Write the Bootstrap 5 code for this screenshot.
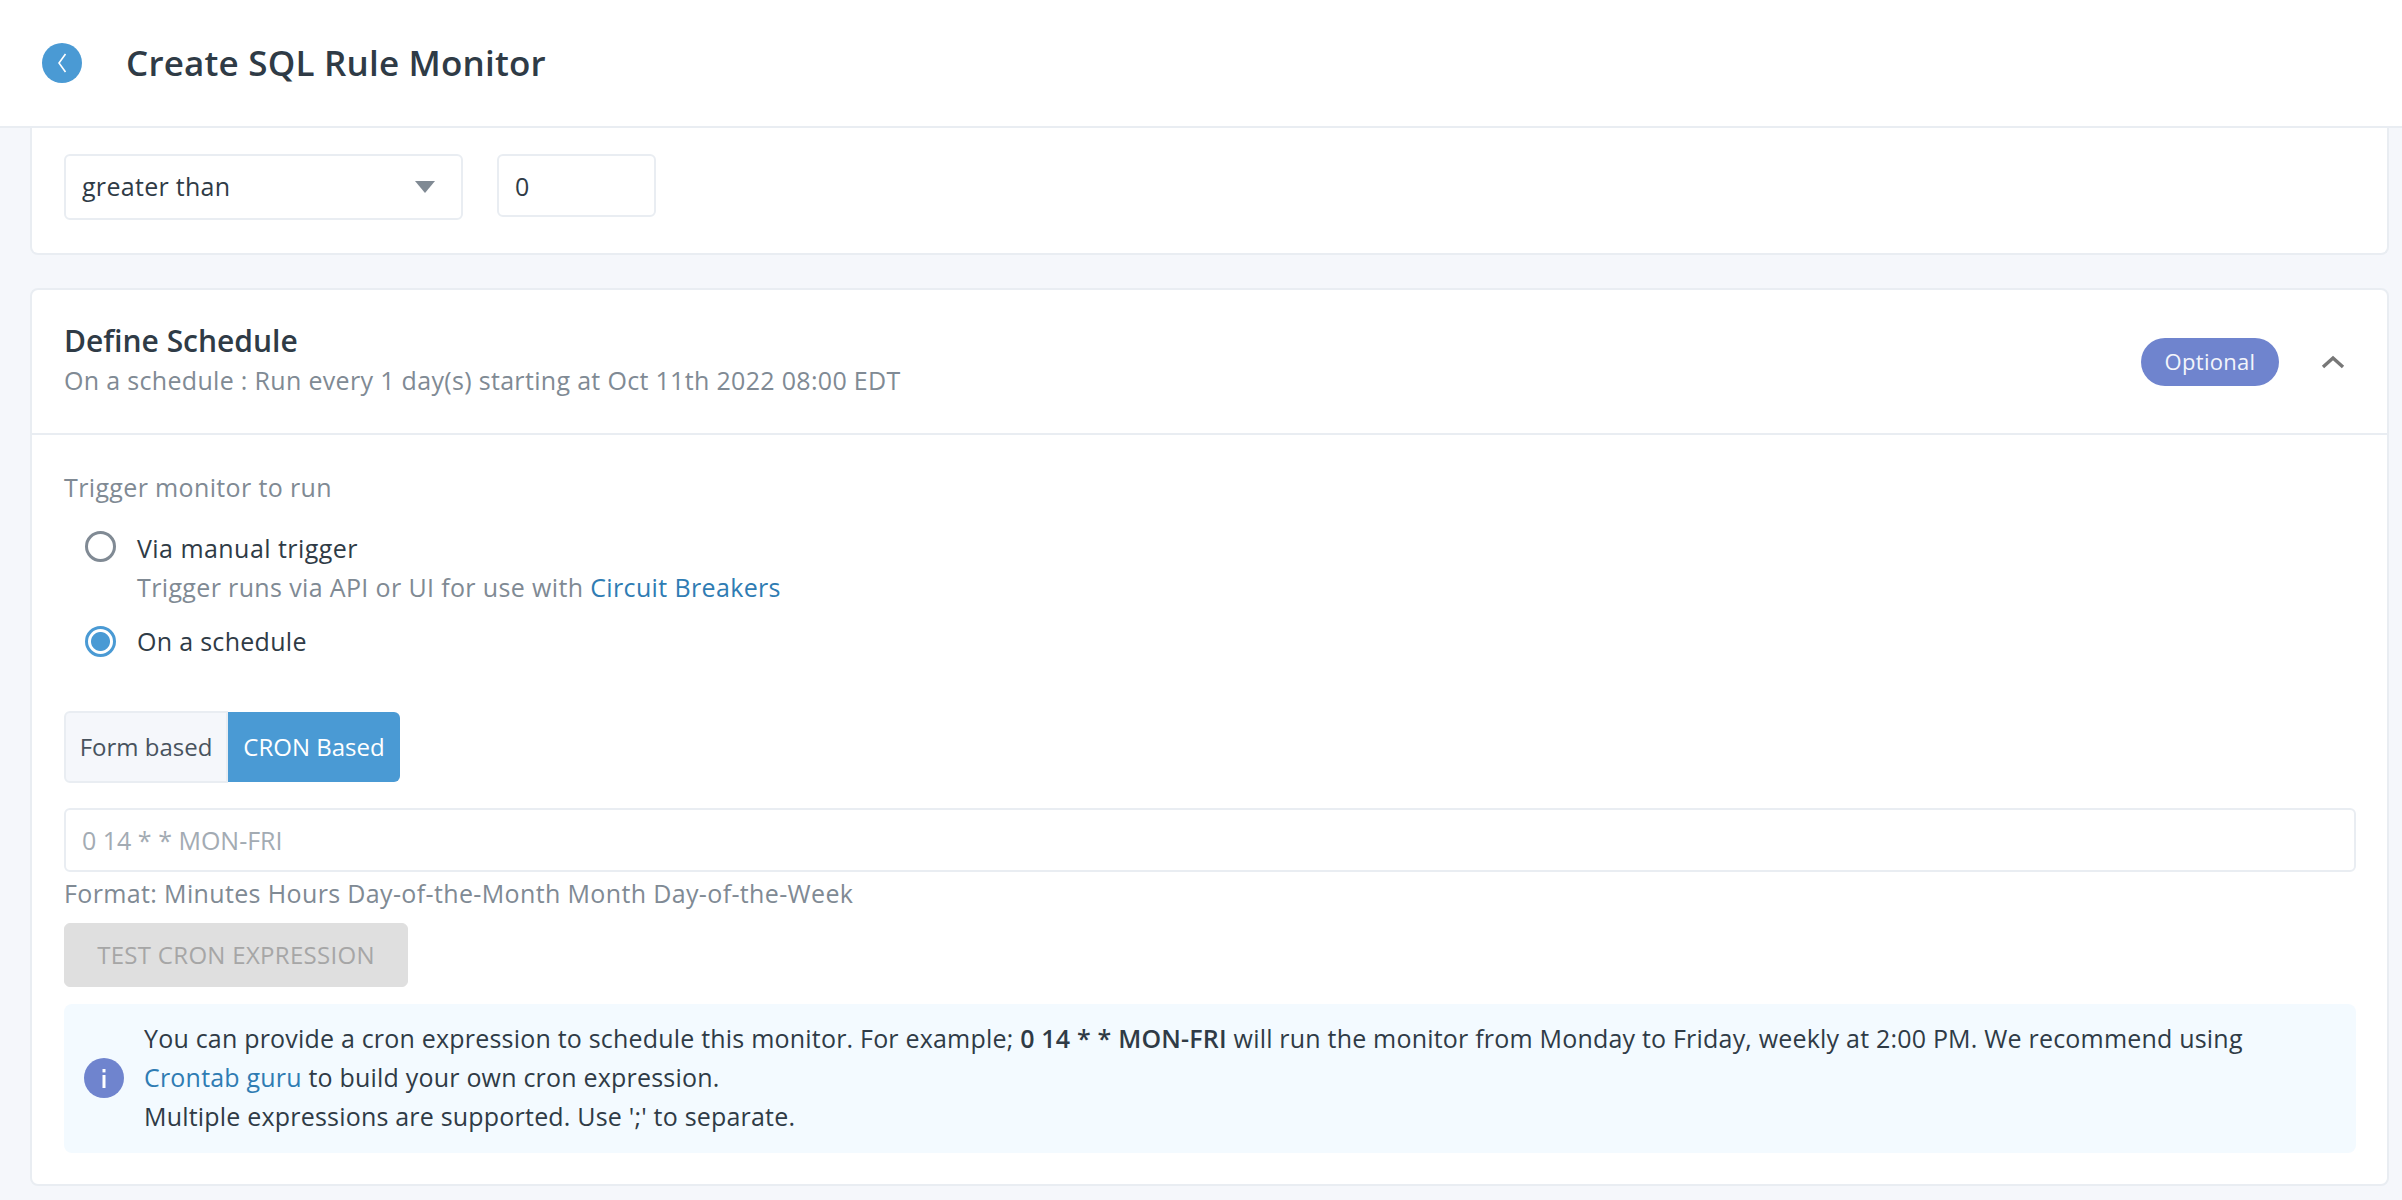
<!DOCTYPE html>
<html lang="en"><head><meta charset="utf-8"><title>Create SQL Rule Monitor</title>
<link href="https://cdn.jsdelivr.net/npm/bootstrap@5.3.0/dist/css/bootstrap.min.css" rel="stylesheet">
<style>
html,body{height:100%;}
body{background:#f5f7fb;font-family:"Open Sans","Noto Sans","Liberation Sans",sans-serif;font-size:25px;letter-spacing:.3px;color:#2f3b46;overflow:hidden;}
.top-head{height:128px;background:#fff;border-bottom:2px solid #e9edf2;padding-left:42px;gap:44px;}
.back-dot{width:40px;height:40px;background:#4a9ad4;border-radius:50%;}
.head-title{font-size:35px;font-weight:600;letter-spacing:.2px;color:#2f3b46;margin:0;}
.page-wrap{padding:0 13px 0 30px;}
.box-one{background:#fff;border:2px solid #e9edf2;border-top:0;border-radius:0 0 8px 8px;height:127px;padding:26px 32px 0;gap:34px;margin-bottom:33px;}
.op-select{width:399px;height:66px;border:2px solid #e9edf2;border-radius:6px;font-size:25px;letter-spacing:.3px;color:#2f3b46;padding:0 16px;box-shadow:none;
background-image:url("data:image/svg+xml,%3Csvg xmlns='http://www.w3.org/2000/svg' viewBox='0 0 20 12'%3E%3Cpath d='M0 0h20L10 12z' fill='%23808a94'/%3E%3C/svg%3E");background-size:20px 12px;background-position:right 26px center;}
.val-input{width:159px;height:63px;border:2px solid #e9edf2;border-radius:6px;font-size:25px;color:#2f3b46;padding:0 16px;}
.box-two{background:#fff;border:2px solid #e9edf2;border-radius:8px;height:898px;}
.box-head{height:145px;border-bottom:2px solid #e9edf2;padding:0 32px;}
.box-title{font-size:30px;font-weight:600;letter-spacing:0;margin:0;line-height:38px;color:#2f3b46;}
.muted-text{color:#808a94;letter-spacing:.36px;}
.sub-line{line-height:40px;margin-bottom:2px;letter-spacing:.32px;}
.opt-pill{background:#6f84ce;color:#f3f5fb;font-size:22px;height:48px;width:138px;border-radius:24px;}
.chev-btn{width:24px;margin:0 10px 0 42px;}
.box-body{padding:0 31px 0 32px;}
.trig-label{line-height:40px;margin-top:32px;}
.radio-row{padding-left:21px;gap:21px;}
.radio-row .form-check-input{width:31px;height:31px;margin:2px 0 0;flex:none;background:#fff;border:3px solid #808a94;box-shadow:none;}
.radio-row .form-check-input:checked{border-color:#4a9ad4;margin-top:0;background-image:radial-gradient(circle,#4a9ad4 0,#4a9ad4 9px,#fff 10px);}
.radio-line{line-height:39px;}
.first-radio{margin-top:22px;letter-spacing:.45px;}
.second-radio{margin-top:15px;}
.mode-group{margin-top:50px;height:72px;}
.mode-group .btn{font-size:24px;letter-spacing:0;padding:0;border-radius:6px;white-space:nowrap;}
.mode-off{background:#f5f7fb;border:2px solid #e9edf2;color:#48535e;width:164px;border-top-right-radius:0!important;border-bottom-right-radius:0!important;}
.mode-on{background:#4a9ad4;border:0;color:#fff;width:172px;margin:1px 0 1px 0!important;border-top-left-radius:0!important;border-bottom-left-radius:0!important;}
.cron-input{height:64px;margin-top:25px;border:2px solid #e9edf2;border-radius:6px;font-size:25px;padding:0 16px;}
.cron-input::placeholder{color:#a3abb3;}
.fmt-line{line-height:40px;margin-top:1px;}
.test-btn{--bs-btn-disabled-bg:#dfdfdf;--bs-btn-disabled-color:#a6a6a6;--bs-btn-disabled-border-color:#dfdfdf;--bs-btn-disabled-opacity:1;display:block;width:344px;height:64px;border-radius:6px;font-size:24px;letter-spacing:.3px;padding:0;margin-top:10px;}
.info-box{background:#f3faff;border-radius:8px;height:149px;margin-top:17px;padding:0 0 2px 20px;gap:20px;}
.info-dot{width:40px;height:40px;flex:none;}
.info-lines{line-height:39px;letter-spacing:.2px;color:#2f3b46;}
.info-lines b{font-weight:600;}
.link-blue{color:#2f7cb3;text-decoration:none;}
</style></head><body>
<header class="top-head d-flex align-items-center">
<a class="back-dot d-flex align-items-center justify-content-center" href="#" aria-label="Back"><svg width="12" height="22" viewBox="0 0 12 22"><path d="M9.5 2 3 11l6.5 9" fill="none" stroke="#fff" stroke-width="1.6"/></svg></a>
<h1 class="head-title">Create SQL Rule Monitor</h1>
</header>
<main class="page-wrap">
<section class="box-one d-flex align-items-start">
<select class="form-select op-select"><option>greater than</option></select>
<input class="form-control val-input" value="0">
</section>
<section class="box-two">
<div class="box-head d-flex align-items-center">
<div class="flex-grow-1">
<h2 class="box-title">Define Schedule</h2>
<div class="muted-text sub-line">On a schedule : Run every 1 day(s) starting at Oct 11th 2022 08:00 EDT</div>
</div>
<span class="opt-pill d-flex align-items-center justify-content-center">Optional</span>
<span class="chev-btn d-flex"><svg width="24" height="14" viewBox="0 0 24 14"><path d="M2 12 12 3l10 9" fill="none" stroke="#777" stroke-width="3.4"/></svg></span>
</div>
<div class="box-body">
<div class="muted-text trig-label">Trigger monitor to run</div>
<div class="radio-row d-flex first-radio">
<input class="form-check-input" type="radio" name="trg">
<div class="radio-line">Via manual trigger<div class="muted-text">Trigger runs via API or UI for use with <a class="link-blue" href="#">Circuit Breakers</a></div></div>
</div>
<div class="radio-row d-flex second-radio align-items-center">
<input class="form-check-input" type="radio" name="trg" checked>
<div class="radio-line">On a schedule</div>
</div>
<div class="btn-group mode-group d-flex justify-content-start" role="group">
<button class="btn mode-off flex-grow-0">Form based</button>
<button class="btn mode-on flex-grow-0">CRON Based</button>
</div>
<input class="form-control cron-input" placeholder="0 14 * * MON-FRI">
<div class="muted-text fmt-line">Format: Minutes Hours Day-of-the-Month Month Day-of-the-Week</div>
<button class="btn test-btn" disabled>TEST CRON EXPRESSION</button>
<div class="info-box d-flex align-items-center">
<svg class="info-dot" viewBox="0 0 40 40"><circle cx="20" cy="20" r="20" fill="#6f84ce"/><rect x="18.5" y="17" width="3" height="13" fill="#fff"/><rect x="18.5" y="11" width="3" height="3.4" fill="#fff"/></svg>
<div class="info-lines">You can provide a cron expression to schedule this monitor. For example; <b>0 14 * * MON-FRI</b> will run the monitor from Monday to Friday, weekly at 2:00 PM. We recommend using<br><a class="link-blue" href="#">Crontab guru</a> to build your own cron expression.<br>Multiple expressions are supported. Use ';' to separate.</div>
</div>
</div>
</section>
</main>
<script src="https://cdn.jsdelivr.net/npm/bootstrap@5.3.0/dist/js/bootstrap.bundle.min.js"></script>
</body></html>
